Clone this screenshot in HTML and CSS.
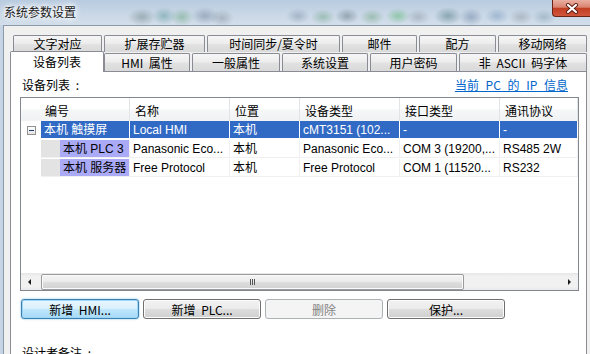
FILE: index.html
```html
<!DOCTYPE html>
<html lang="zh-CN">
<head>
<meta charset="UTF-8">
<meta name="viewport" content="width=device-width, initial-scale=1.0">
<title>系统参数设置</title>
<link rel="stylesheet" href="styles.css">
</head>
<body>
  <div class="window">
    <div class="titlebar">
      <span class="title">系统参数设置</span>
      <div class="close">
        <svg width="14" height="11" viewBox="0 0 14 11">
          <path d="M3 2 L11 9 M11 2 L3 9" stroke="#5a1a10" stroke-width="4" stroke-linecap="round"/>
          <path d="M3 2 L11 9 M11 2 L3 9" stroke="#ffffff" stroke-width="2.2" stroke-linecap="round"/>
        </svg>
      </div>
    </div>

    <div class="frame">
      <div class="client">
        <div class="tabs">
          <div class="tabrow back">
            <div class="tab">文字对应</div>
            <div class="tab">扩展存贮器</div>
            <div class="tab">时间同步/夏令时</div>
            <div class="tab">邮件</div>
            <div class="tab">配方</div>
            <div class="tab">移动网络</div>
          </div>
          <div class="tabrow front">
            <div class="tab active">设备列表</div>
            <div class="tab">HMI 属性</div>
            <div class="tab">一般属性</div>
            <div class="tab">系统设置</div>
            <div class="tab">用户密码</div>
            <div class="tab">非 ASCII 码字体</div>
          </div>
        </div>

        <div class="panel">
          <div class="listhead">
            <span class="caption">设备列表 :</span>
            <a class="iplink" href="#">当前 PC 的 IP 信息</a>
          </div>

          <div class="listview">
            <div class="lv-head">
              <div class="hcell first">编号</div>
              <div class="hcell">名称</div>
              <div class="hcell">位置</div>
              <div class="hcell">设备类型</div>
              <div class="hcell">接口类型</div>
              <div class="hcell">通讯协议</div>
            </div>

            <div class="lv-body">
              <div class="lv-row selected">
                <div class="cell tree"><span class="expander"></span></div>
                <div class="cell">本机 触摸屏</div>
                <div class="cell">Local HMI</div>
                <div class="cell">本机</div>
                <div class="cell">cMT3151 (102...</div>
                <div class="cell">-</div>
                <div class="cell">-</div>
              </div>
              <div class="lv-row">
                <div class="cell tree"></div>
                <div class="cell child"><span class="tag">本机 PLC 3</span></div>
                <div class="cell">Panasonic Eco...</div>
                <div class="cell">本机</div>
                <div class="cell">Panasonic Eco...</div>
                <div class="cell">COM 3 (19200,...</div>
                <div class="cell">RS485 2W</div>
              </div>
              <div class="lv-row">
                <div class="cell tree"></div>
                <div class="cell child"><span class="tag">本机 服务器</span></div>
                <div class="cell">Free Protocol</div>
                <div class="cell">本机</div>
                <div class="cell">Free Protocol</div>
                <div class="cell">COM 1 (11520...</div>
                <div class="cell">RS232</div>
              </div>
            </div>

            <div class="hscroll">
              <div class="arrow"><span class="tri left"></span></div>
              <div class="thumb"><span class="grip"></span></div>
              <div class="track"></div>
              <div class="arrow"><span class="tri right"></span></div>
            </div>
          </div>

          <div class="buttons">
            <button class="btn default">新增 HMI...</button>
            <button class="btn">新增 PLC...</button>
            <button class="btn" disabled>删除</button>
            <button class="btn">保护...</button>
          </div>

          <div class="notes">设计者备注 :</div>
        </div>
      </div>
    </div>
  </div>
</body>
</html>
```

FILE: styles.css
```css
body {
  margin: 0;
  width: 590px;
  height: 354px;
  overflow: hidden;
  font-family: "Noto Sans CJK SC", sans-serif;
  font-size: 12px;
  color: #000;
  background: #f0f0f0;
}

.window {
  width: 590px;
  height: 354px;
  display: flex;
  flex-direction: column;
}

/* aero glass title bar, blurred desktop behind it */
.titlebar {
  height: 25px;
  flex: none;
  display: flex;
  justify-content: space-between;
  align-items: flex-start;
  background:
    radial-gradient(ellipse 14px 9px at 142px 17px, rgba(70, 95, 90, 0.35), transparent),
    radial-gradient(ellipse 12px 9px at 164px 16px, rgba(40, 120, 120, 0.35), transparent),
    radial-gradient(ellipse 12px 9px at 182px 17px, rgba(60, 140, 80, 0.35), transparent),
    radial-gradient(ellipse 14px 9px at 205px 16px, rgba(70, 90, 120, 0.35), transparent),
    radial-gradient(ellipse 12px 9px at 222px 18px, rgba(90, 100, 110, 0.3), transparent),
    radial-gradient(ellipse 12px 8px at 298px 16px, rgba(80, 100, 130, 0.3), transparent),
    radial-gradient(ellipse 12px 8px at 323px 17px, rgba(70, 140, 90, 0.35), transparent),
    radial-gradient(ellipse 12px 8px at 347px 16px, rgba(50, 70, 80, 0.35), transparent),
    radial-gradient(ellipse 12px 8px at 372px 17px, rgba(70, 140, 80, 0.35), transparent),
    radial-gradient(ellipse 12px 8px at 398px 16px, rgba(60, 170, 80, 0.4), transparent),
    radial-gradient(ellipse 12px 8px at 418px 17px, rgba(100, 110, 120, 0.3), transparent),
    radial-gradient(ellipse 14px 9px at 448px 16px, rgba(40, 90, 100, 0.4), transparent),
    radial-gradient(ellipse 12px 9px at 471px 17px, rgba(60, 90, 130, 0.35), transparent),
    radial-gradient(ellipse 12px 8px at 497px 16px, rgba(60, 110, 160, 0.3), transparent),
    radial-gradient(ellipse 12px 8px at 521px 17px, rgba(110, 110, 120, 0.3), transparent),
    radial-gradient(ellipse 12px 8px at 544px 17px, rgba(80, 120, 140, 0.3), transparent),
    linear-gradient(#b8cbe0, #c9d7e6 55%, #d2deea);
}

.title {
  padding: 5px 0 0 4px;
  line-height: 14px;
  color: #1a1a1a;
  text-shadow: 0 0 4px #fff, 0 0 6px #fff, 0 0 8px #fff;
}

.close {
  width: 38px;
  height: 17px;
  box-sizing: border-box;
  border: 1px solid #6b2317;
  border-top: none;
  border-right: none;
  border-radius: 0 0 0 4px;
  background: linear-gradient(#eab0a2 0%, #d98370 45%, #c23e22 52%, #d0573c 100%);
  display: flex;
  justify-content: center;
  align-items: center;
}

.frame {
  flex: 1;
  display: flex;
  padding-left: 3px;
  background: #c6d5e5;
}

.client {
  flex: 1;
  display: flex;
  flex-direction: column;
  background: #f0f0f0;
  border-top: 1px solid #8d99a7;
  border-left: 1px solid #8d99a7;
  padding: 9px 3px 0 6px;
}

/* tabs */
.tabrow {
  display: flex;
  gap: 2px;
}

.tabrow.back {
  height: 17px;
  padding-left: 3px;
}

.tabrow.front {
  height: 19px;
  align-items: flex-end;
}

.tab {
  box-sizing: border-box;
  height: 17px;
  border: 1px solid #898c95;
  border-bottom: none;
  border-radius: 2px 2px 0 0;
  background: linear-gradient(#f6f6f6 0%, #ededed 45%, #e1e1e1 55%, #d9d9d9 100%);
  display: flex;
  justify-content: center;
  align-items: center;
  white-space: nowrap;
  line-height: 14px;
  word-spacing: 3px;
}

.front .tab {
  height: 18px;
}

.back .tab:nth-child(1) { width: 89px; }
.back .tab:nth-child(2) { width: 101px; }
.back .tab:nth-child(3) { width: 133px; }
.back .tab:nth-child(4) { width: 75px; }
.back .tab:nth-child(5) { width: 77px; }
.back .tab:nth-child(6) { width: 89px; }

.front .tab:nth-child(1) { width: 94px; }
.front .tab:nth-child(2) { width: 86px; }
.front .tab:nth-child(3) { width: 88px; }
.front .tab:nth-child(4) { width: 86px; }
.front .tab:nth-child(5) { width: 87px; }
.front .tab:nth-child(6) { width: 128px; }

.front .tab.active {
  height: 21px;
  margin-right: -2px;
  margin-bottom: -1px;
  background: #fff;
  position: relative;
  z-index: 2;
  padding-bottom: 1px;
}

/* tab page */
.panel {
  flex: 1;
  background: #fff;
  border: 1px solid #898c95;
  border-bottom: none;
  padding: 0 7px 0 9px;
}

.listhead {
  height: 25px;
  display: flex;
  justify-content: space-between;
  align-items: center;
}

.caption {
  margin-left: 2px;
  word-spacing: 3px;
}

.iplink {
  margin-right: 11px;
  color: #0066cc;
  text-decoration: underline;
  word-spacing: 4px;
}

.listview {
  box-sizing: border-box;
  height: 194px;
  border: 1px solid #828790;
  display: flex;
  flex-direction: column;
  font-family: "Liberation Sans", "Noto Sans CJK SC", sans-serif;
}

.lv-head {
  height: 23px;
  flex: none;
  display: grid;
  grid-template-columns: 109px 100px 70px 100px 100px 78px;
  background: linear-gradient(#ffffff 0%, #ffffff 45%, #f5f6f7 55%, #f1f2f4 100%);
  font-family: "Noto Sans CJK SC", sans-serif;
}

.hcell {
  border-right: 1px solid #e3e4e6;
  padding: 2px 0 0 5px;
  display: flex;
  align-items: center;
}

.hcell.first {
  padding-left: 24px;
}

.lv-body {
  flex: 1;
}

.lv-row {
  display: grid;
  grid-template-columns: 20px 89px 100px 70px 100px 100px 78px;
  height: 19px;
}

.cell {
  box-sizing: border-box;
  height: 18px;
  line-height: 18px;
  padding-left: 3px;
  border-right: 1px solid #f0f0f0;
  border-bottom: 1px solid #f0f0f0;
  white-space: nowrap;
  overflow: hidden;
}

.cell.tree {
  border: none;
  padding-left: 6px;
  display: flex;
  align-items: center;
}

.lv-row.selected .cell {
  background: #316ac5;
  color: #fff;
  border-right-color: #fff;
  border-bottom-color: #fff;
}

.lv-row.selected .cell.tree {
  background: #fff;
}

.expander {
  width: 9px;
  height: 9px;
  box-sizing: border-box;
  border: 1px solid #919191;
  background: linear-gradient(#ffffff, #e4e4e4);
  display: flex;
  justify-content: center;
  align-items: center;
}

.expander::after {
  content: "";
  width: 5px;
  height: 1px;
  background: #1e3c6a;
}

.cell.child {
  padding-left: 19px;
  background: #e3e3e3;
}

.tag {
  display: block;
  height: 100%;
  padding-left: 3px;
  background: #aaaaf7;
}

/* horizontal scroll bar */
.hscroll {
  height: 17px;
  flex: none;
  display: flex;
  align-items: center;
  background: linear-gradient(#e6e6e6, #f1f1f1 20%, #f1f1f1 80%, #e9e9e9);
}

.arrow {
  width: 17px;
  height: 17px;
  display: flex;
  justify-content: center;
  align-items: center;
}

.tri {
  width: 0;
  height: 0;
  border-top: 3px solid transparent;
  border-bottom: 3px solid transparent;
}

.tri.left {
  border-right: 3px solid #1a1a1a;
}

.tri.right {
  border-left: 3px solid #1a1a1a;
}

.thumb {
  box-sizing: border-box;
  width: 423px;
  height: 16px;
  margin-left: 3px;
  border: 1px solid #9b9b9b;
  border-radius: 2px;
  background: linear-gradient(#f4f4f4 0%, #ececec 45%, #dcdcdc 55%, #d2d2d2 100%);
  box-shadow: inset 0 0 0 1px #fafafa;
  display: flex;
  justify-content: center;
  align-items: center;
}

.grip {
  width: 5px;
  height: 6px;
  background: repeating-linear-gradient(90deg, #555 0 1px, transparent 1px 2px);
}

.track {
  flex: 1;
}

/* buttons */
.buttons {
  display: flex;
  gap: 4px;
  margin-top: 8px;
  padding-left: 1px;
}

.btn {
  width: 118px;
  height: 20px;
  padding: 0;
  font-family: "Noto Sans CJK SC", sans-serif;
  font-size: 12px;
  color: #000;
  word-spacing: 3px;
  border: 1px solid #707070;
  border-radius: 3px;
  background: linear-gradient(#f2f2f2 0%, #ebebeb 48%, #dddddd 52%, #cfcfcf 100%);
  box-shadow: inset 0 0 0 1px #fcfcfc;
}

.btn.default {
  border-color: #3c7fb1;
  background: linear-gradient(#eaf6fd 0%, #d9f0fc 48%, #bee6fd 52%, #a7d9f5 100%);
  box-shadow: inset 0 0 0 1px #9ed6f5, 0 0 2px #62b6e6;
}

.btn:disabled {
  color: #838383;
  border-color: #adb2b5;
  background: #f4f4f4;
  box-shadow: none;
}

.notes {
  margin: 27px 0 0 2px;
  line-height: 14px;
  word-spacing: 3px;
}
```
